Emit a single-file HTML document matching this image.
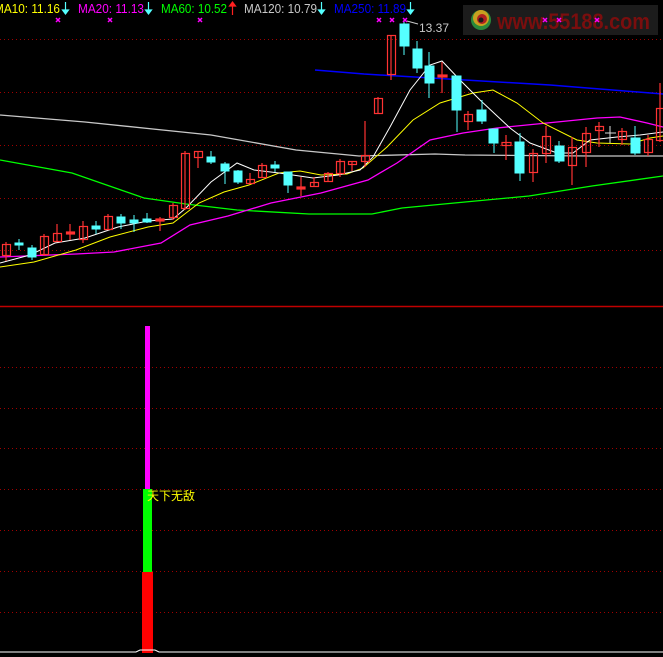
<!DOCTYPE html>
<html><head><meta charset="utf-8"><style>
html,body{margin:0;padding:0;background:#000;width:663px;height:657px;overflow:hidden}
svg{display:block}
text{font-family:"Liberation Sans","Noto Sans CJK SC",sans-serif}
</style></head><body>
<svg width="663" height="657" viewBox="0 0 663 657" xmlns="http://www.w3.org/2000/svg">
<rect width="663" height="657" fill="#000"/>
<g stroke="#a00000" stroke-width="1" stroke-dasharray="1,3">
<line x1="0" y1="39.5" x2="663" y2="39.5"/><line x1="0" y1="92.5" x2="663" y2="92.5"/>
<line x1="0" y1="145.5" x2="663" y2="145.5"/><line x1="0" y1="198.5" x2="663" y2="198.5"/>
<line x1="0" y1="250.5" x2="663" y2="250.5"/>
<line x1="0" y1="367.5" x2="663" y2="367.5"/><line x1="0" y1="408.5" x2="663" y2="408.5"/>
<line x1="0" y1="448.5" x2="663" y2="448.5"/><line x1="0" y1="489.5" x2="663" y2="489.5"/>
<line x1="0" y1="530.5" x2="663" y2="530.5"/><line x1="0" y1="571.5" x2="663" y2="571.5"/>
<line x1="0" y1="612.5" x2="663" y2="612.5"/>
</g>
<line x1="0" y1="306.5" x2="663" y2="306.5" stroke="#c00000" stroke-width="1.5"/>

<!-- logo -->
<rect x="463" y="5" width="195" height="30" fill="#1c1c1c"/>
<circle cx="481" cy="20" r="10" fill="#2a8a3a"/>
<circle cx="481" cy="18" r="8" fill="#c9a020"/>
<circle cx="482" cy="19" r="5" fill="#b02020"/>
<circle cx="481" cy="20" r="2.5" fill="#1c1c1c"/>
<text x="497" y="29" font-size="22" font-weight="bold" fill="#7a0e0e" textLength="153" lengthAdjust="spacingAndGlyphs">www.55188.com</text>

<!-- MA lines -->
<g fill="none" stroke-width="1">
<polyline stroke="#0000ff" stroke-width="1.5" points="315,70 364,74 465,80 550,85 663,94"/>
<polyline stroke="#c8c8c8" stroke-width="1.3" points="0,115 85,122 211,135 296,150 359,156 435,154 465,155 592,156 663,156"/>
<polyline stroke="#00ff00" stroke-width="1.3" points="0,160 72,173 144,198 186,204 237,210 309,214 372,214 402,208 465,202 529,196 592,186 663,176"/>
<polyline stroke="#ff00ff" stroke-width="1.3" points="0,257 76,254 114,252 161,243 190,225 228,216 271,203 321,193 368,180 397,163 430,140 463,133 497,128 547,123 597,118 620,117 647,123 663,127"/>
<polyline stroke="#ffff00" points="0,267 34,262 76,250 110,237 148,227 173,223 199,203 224,192 249,185 279,173 300,171 321,175 347,174 363,168 387,147 413,120 440,103 473,93 493,90 517,103 543,123 577,140 597,143 630,144 650,138 663,136"/>
<polyline stroke="#ffffff" points="0,263 30,255 55,243 85,238 118,227 148,221 173,219 186,208 211,182 237,163 254,170 279,173 313,178 338,175 360,170 373,157 390,127 410,90 430,65 442,61 460,80 480,100 510,128 530,143 557,153 573,153 590,140 617,137 640,135 663,132"/>
</g>

<!-- candles: red hollow -->
<g fill="none" stroke="#ff3333" stroke-width="1.2">
<line x1="6" y1="242" x2="6" y2="261"/><rect x="2.5" y="244.5" width="8" height="11"/>
<line x1="44" y1="234" x2="44" y2="256"/><rect x="40.5" y="236.5" width="8" height="18"/>
<line x1="57" y1="224" x2="57" y2="241"/><rect x="53.5" y="233.5" width="8" height="8"/>
<line x1="70" y1="224" x2="70" y2="240"/><rect x="66.5" y="232" width="8" height="2" fill="#ff3333"/>
<line x1="83" y1="221" x2="83" y2="243"/><rect x="79.5" y="226.5" width="8" height="13"/>
<line x1="108" y1="214" x2="108" y2="229"/><rect x="104.5" y="216.5" width="8" height="13"/>
<line x1="160" y1="217" x2="160" y2="231"/><rect x="156" y="219" width="8" height="2" fill="#ff3333"/>
<line x1="173" y1="203" x2="173" y2="220"/><rect x="169.5" y="205.5" width="8" height="12"/>
<line x1="185" y1="151" x2="185" y2="210"/><rect x="181.5" y="153.5" width="8" height="55"/>
<line x1="198" y1="151" x2="198" y2="168"/><rect x="194.5" y="151.5" width="8" height="6"/>
<line x1="250" y1="173" x2="250" y2="183"/><rect x="246.5" y="179.5" width="8" height="4"/>
<line x1="262" y1="163" x2="262" y2="177"/><rect x="258.5" y="165.5" width="8" height="12"/>
<line x1="301" y1="177" x2="301" y2="196"/><rect x="297" y="187" width="8" height="2" fill="#ff3333"/>
<line x1="314" y1="177" x2="314" y2="187"/><rect x="310.5" y="182.5" width="8" height="4"/>
<line x1="328" y1="172" x2="328" y2="182"/><rect x="324.5" y="173.5" width="8" height="8"/>
<line x1="340" y1="159" x2="340" y2="177"/><rect x="336.5" y="161.5" width="8" height="12"/>
<line x1="352" y1="161" x2="352" y2="171"/><rect x="348.5" y="161.5" width="8" height="3"/>
<line x1="365" y1="121" x2="365" y2="167"/><rect x="361.5" y="155.5" width="8" height="6"/>
<line x1="378" y1="97" x2="378" y2="114"/><rect x="374.5" y="98.5" width="8" height="15"/>
<line x1="391" y1="35" x2="391" y2="80"/><rect x="387.5" y="35.5" width="8" height="39"/>
<line x1="442" y1="62" x2="442" y2="93"/><rect x="438" y="75" width="9" height="2" fill="#ff3333"/>
<line x1="468" y1="111" x2="468" y2="130"/><rect x="464.5" y="114.5" width="8" height="7"/>
<line x1="506" y1="135" x2="506" y2="160"/><rect x="502" y="142.5" width="9" height="3"/>
<line x1="533" y1="149" x2="533" y2="182"/><rect x="529.5" y="153.5" width="8" height="19"/>
<line x1="546" y1="126" x2="546" y2="163"/><rect x="542.5" y="136.5" width="8" height="17"/>
<line x1="572" y1="137" x2="572" y2="185"/><rect x="568.5" y="147.5" width="8" height="18"/>
<line x1="586" y1="127" x2="586" y2="167"/><rect x="582.5" y="133.5" width="8" height="19"/>
<line x1="599" y1="122" x2="599" y2="147"/><rect x="595.5" y="126.5" width="8" height="4"/>
<line x1="622" y1="128" x2="622" y2="145"/><rect x="618.5" y="131.5" width="8" height="8"/>
<line x1="648" y1="135" x2="648" y2="156"/><rect x="644.5" y="139.5" width="8" height="13"/>
<line x1="660" y1="83" x2="660" y2="142"/><rect x="656.5" y="108.5" width="8" height="32"/>
</g>
<!-- cyan candles -->
<g fill="#55ffff" stroke="#55ffff" stroke-width="1">
<line x1="19" y1="239" x2="19" y2="250"/><rect x="15" y="243" width="8" height="2"/>
<line x1="32" y1="245" x2="32" y2="260"/><rect x="28" y="248" width="8" height="9"/>
<line x1="96" y1="221" x2="96" y2="234"/><rect x="92" y="226" width="8" height="3"/>
<line x1="121" y1="214" x2="121" y2="229"/><rect x="117" y="217" width="8" height="6"/>
<line x1="134" y1="215" x2="134" y2="232"/><rect x="130" y="220" width="8" height="3"/>
<line x1="147" y1="213" x2="147" y2="223"/><rect x="143" y="219" width="8" height="3"/>
<line x1="211" y1="151" x2="211" y2="164"/><rect x="207" y="157" width="8" height="5"/>
<line x1="225" y1="162" x2="225" y2="184"/><rect x="221" y="164" width="8" height="7"/>
<line x1="238" y1="170" x2="238" y2="184"/><rect x="234" y="171" width="8" height="11"/>
<line x1="275" y1="161" x2="275" y2="172"/><rect x="271" y="165" width="8" height="3"/>
<line x1="288" y1="172" x2="288" y2="193"/><rect x="284" y="172" width="8" height="13"/>
<line x1="404" y1="20" x2="404" y2="55"/><rect x="400" y="24" width="9" height="22"/>
<line x1="417" y1="41" x2="417" y2="73"/><rect x="413" y="49" width="9" height="19"/>
<line x1="429" y1="52" x2="429" y2="98"/><rect x="425" y="66" width="9" height="17"/>
<line x1="457" y1="76" x2="457" y2="132"/><rect x="452" y="76" width="9" height="34"/>
<line x1="482" y1="100" x2="482" y2="124"/><rect x="477" y="110" width="9" height="11"/>
<line x1="494" y1="129" x2="494" y2="153"/><rect x="489" y="129" width="9" height="14"/>
<line x1="520" y1="133" x2="520" y2="181"/><rect x="515" y="142" width="9" height="31"/>
<line x1="559" y1="141" x2="559" y2="163"/><rect x="555" y="146" width="9" height="15"/>
<line x1="635" y1="126" x2="635" y2="155"/><rect x="631" y="138" width="9" height="15"/>
</g>
<g stroke="#dddddd" stroke-width="1"><line x1="610" y1="126" x2="610" y2="143"/><line x1="605" y1="133" x2="616" y2="133"/></g>

<!-- header -->
<g font-size="13" lengthAdjust="spacingAndGlyphs">
<text x="-6" y="13" fill="#ffff00" textLength="66" lengthAdjust="spacingAndGlyphs">MA10: 11.16</text>
<text x="78" y="13" fill="#ff00ff" textLength="66" lengthAdjust="spacingAndGlyphs">MA20: 11.13</text>
<text x="161" y="13" fill="#00ff00" textLength="66" lengthAdjust="spacingAndGlyphs">MA60: 10.52</text>
<text x="244" y="13" fill="#c8c8c8" textLength="73" lengthAdjust="spacingAndGlyphs">MA120: 10.79</text>
<text x="334" y="13" fill="#0000ff" textLength="72" lengthAdjust="spacingAndGlyphs">MA250: 11.89</text>
</g>
<g stroke-width="1.2">
<g stroke="#55ffff" fill="#55ffff">
<line x1="65.5" y1="2" x2="65.5" y2="14"/><path d="M62.5,10 L68.5,10 L65.5,14Z"/>
<line x1="148.5" y1="2" x2="148.5" y2="14"/><path d="M145.5,10 L151.5,10 L148.5,14Z"/>
<line x1="321.5" y1="2" x2="321.5" y2="14"/><path d="M318.5,10 L324.5,10 L321.5,14Z"/>
<line x1="410.5" y1="2" x2="410.5" y2="14"/><path d="M407.5,10 L413.5,10 L410.5,14Z"/>
</g>
<g stroke="#ff2020" fill="#ff2020"><line x1="232.5" y1="2" x2="232.5" y2="15"/><path d="M229.5,6 L235.5,6 L232.5,2Z"/></g>
</g>
<g stroke="#ff00ff" stroke-width="1.5">
<path d="M56,18 l4,4 m0,-4 l-4,4"/><path d="M108,18 l4,4 m0,-4 l-4,4"/><path d="M198,18 l4,4 m0,-4 l-4,4"/>
<path d="M377,18 l4,4 m0,-4 l-4,4"/><path d="M390,18 l4,4 m0,-4 l-4,4"/><path d="M403,18 l4,4 m0,-4 l-4,4"/>
<path d="M543,18 l4,4 m0,-4 l-4,4"/><path d="M557,18 l4,4 m0,-4 l-4,4"/><path d="M595,18 l4,4 m0,-4 l-4,4"/>
</g>
<line x1="407" y1="21" x2="418" y2="24" stroke="#c8c8c8"/>
<text x="419" y="32" font-size="12" fill="#c8c8c8">13.37</text>

<!-- bottom indicator -->
<rect x="145" y="326" width="5" height="164" fill="#ff00ff"/>
<rect x="143" y="489" width="9" height="83" fill="#00ff00"/>
<rect x="142" y="572" width="11" height="81" fill="#ff0000"/>
<polyline points="0,652 136,652 140,650 155,650 159,652 663,652" fill="none" stroke="#ffffff" stroke-width="1"/>
<text x="147" y="500" font-size="12" fill="#ffff00">天下无敌</text>
</svg>
</body></html>
